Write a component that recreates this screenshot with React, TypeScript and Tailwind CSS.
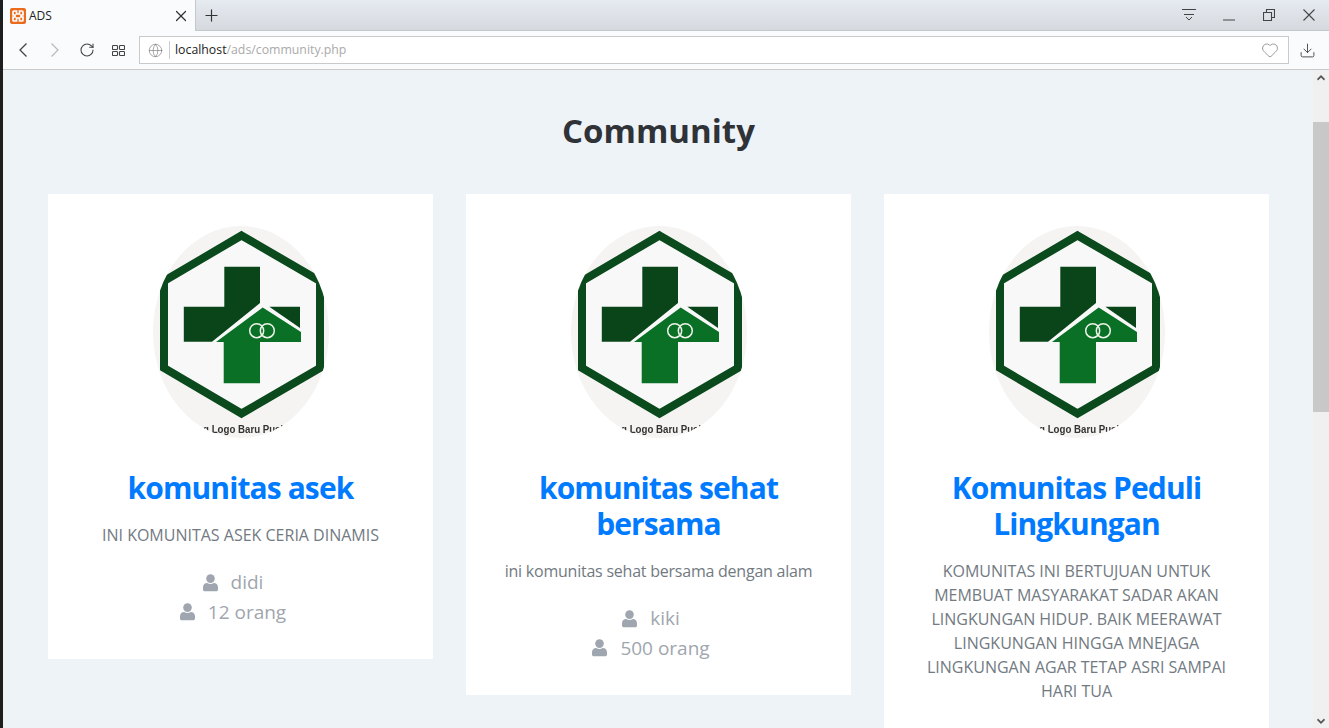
import { useId } from "react";
import { Plus, X, RotateCw, Heart, Download, Globe } from "lucide-react";

interface Community {
  title: string;
  description: string;
  descClass?: string;
  owner?: string;
  members?: string;
}

const communities: Community[] = [
  {
    title: "komunitas asek",
    description: "INI KOMUNITAS ASEK CERIA DINAMIS",
    owner: "didi",
    members: "12 orang",
  },
  {
    title: "komunitas sehat bersama",
    description: "ini komunitas sehat bersama dengan alam",
    descClass: "tracking-[-0.23px]",
    owner: "kiki",
    members: "500 orang",
  },
  {
    title: "Komunitas Peduli Lingkungan",
    description:
      "KOMUNITAS INI BERTUJUAN UNTUK MEMBUAT MASYARAKAT SADAR AKAN LINGKUNGAN HIDUP. BAIK MEERAWAT LINGKUNGAN HINGGA MNEJAGA LINGKUNGAN AGAR TETAP ASRI SAMPAI HARI TUA",
  },
];

function XamppIcon() {
  return (
    <svg width="16" height="16" viewBox="0 0 16 16">
      <rect width="16" height="16" rx="2" fill="#ea6b1e" />
      <path
        d="M4 3h2.500v3h3V3H12a1 1 0 0 1 1 1v3h-2v2h2v3a1 1 0 0 1-1 1H9.500v-3h-3v3H4a1 1 0 0 1-1-1V9h2V7H3V4a1 1 0 0 1 1-1z"
        fill="none"
        stroke="#fff"
        strokeWidth="1.700"
      />
    </svg>
  );
}

function PersonIcon() {
  return (
    <svg width="15" height="18" viewBox="0 0 15 18" fill="#9fa6b0">
      <circle cx="7.500" cy="4.600" r="4.300" />
      <path d="M0 15.500v-2.300C0 10.600 2 9 4.200 9c1 .6 2.100 1 3.300 1s2.300-.4 3.300-1C13 9 15 10.600 15 13.200v2.300c0 1-.8 1.800-1.800 1.800H1.800C.8 17.300 0 16.500 0 15.500z" />
    </svg>
  );
}

function PuskesmasLogo() {
  const id = useId();
  const clip = `${id}-clip`;
  return (
    <svg width="176" height="212" viewBox="0 0 176 212" className="block mx-auto blur-[0.3px]">
      <defs>
        <clipPath id={clip}>
          <ellipse cx="88" cy="106" rx="88" ry="106" />
        </clipPath>
      </defs>
      <g clipPath={`url(#${clip})`}>
        <rect width="176" height="212" fill="#f5f4f3" />
        <polygon
          points="88.500,9.500 167,55 167,142 88.500,187.500 11,142 11,55"
          fill="#f8f8f8"
          stroke="#0a4a1c"
          strokeWidth="8"
        />
        <polygon
          points="71.300,40.700 107,40.700 107,77 59,115.700 30.800,115.700 30.800,80.700 71.300,80.700"
          fill="#0a4519"
        />
        <polygon points="116.300,80.700 147,80.700 147,102" fill="#0a4519" />
        <polygon
          points="109.700,81.500 148,106 148,116 107,116 107,157.300 70.700,157.300 70.700,116 63,116"
          fill="#0a7026"
        />
        <circle cx="103.700" cy="104.700" r="7" fill="none" stroke="#eef3ea" strokeWidth="1.500" />
        <circle cx="114.300" cy="104.700" r="7" fill="none" stroke="#eef3ea" strokeWidth="1.500" />
        <text
          x="88"
          y="207"
          textAnchor="middle"
          fontSize="11"
          fontWeight="700"
          fill="#333"
          fontFamily="'Liberation Sans', sans-serif"
          textLength="150"
          lengthAdjust="spacingAndGlyphs"
        >
          Lambang Logo Baru Puskesmas
        </text>
      </g>
    </svg>
  );
}

function CommunityCard({ item }: { item: Community }) {
  return (
    <div className="bg-white px-8 pt-8 pb-[32px] text-center">
      <PuskesmasLogo />
      <h3 className="mt-8 text-[30px] leading-9 font-bold tracking-[-0.9px] text-[#007bff]">{item.title}</h3>
      <p className={`mt-[17px] text-base leading-6 text-[#727a82] ${item.descClass ?? ""}`}>{item.description}</p>
      {item.owner && (
        <div className="mt-[21px] text-[19px] leading-[29.5px] text-[#a0a6ae]">
          <div className="flex items-center justify-center gap-[13px] pr-[15px]">
            <PersonIcon />
            <span>{item.owner}</span>
          </div>
          <div className="flex items-center justify-center gap-[13px] pr-[15px]">
            <PersonIcon />
            <span>{item.members}</span>
          </div>
        </div>
      )}
    </div>
  );
}

export default function App() {
  return (
    <div className="h-screen flex overflow-hidden bg-[#eef3f7] font-['Open_Sans',sans-serif]">
      {/* Dark window edge */}
      <div className="w-[3px] shrink-0 bg-[#1e1e1e]" />

      <div className="flex-1 min-w-0 flex flex-col">
        {/* Tab bar */}
        <div className="h-[31px] flex items-stretch bg-gradient-to-b from-[#e6eaf1] to-[#d6dadf] border-b border-[#c4c8cc]">
          <div className="w-[193px] -mb-px flex items-center pl-[7px] pr-[5px] bg-[#fafbfc] border-r border-[#c4c8cc] text-xs text-[#222]">
            <XamppIcon />
            <span className="ml-[3px]">ADS</span>
            <X className="ml-auto text-[#333]" size={18} strokeWidth={1.600} />
          </div>
          <Plus className="ml-1.5 self-center text-[#333]" size={19} strokeWidth={1.500} />
          <div className="ml-auto mr-3.5 flex items-center">
            <svg width="14" height="12" viewBox="0 0 14 12" fill="none" stroke="#444" strokeWidth="1">
              <path d="M0 .5h14M2 5.500h10M4 8l3 3 3-3" />
            </svg>
            <svg className="ml-[27px] mt-[10px]" width="12" height="2" viewBox="0 0 12 2" stroke="#444">
              <path d="M0 1h12" />
            </svg>
            <svg className="ml-[28px]" width="12" height="12" viewBox="0 0 12 12" fill="none" stroke="#444" strokeWidth="1.100">
              <path d="M.5 3.500h8v8h-8zM3.500 3.500v-3h8v8h-3" />
            </svg>
            <svg className="ml-[28px]" width="12" height="12" viewBox="0 0 12 12" fill="none" stroke="#444" strokeWidth="1.100">
              <path d="M.5.500l11 11M11.500.500l-11 11" />
            </svg>
          </div>
        </div>

        {/* Address bar */}
        <div className="h-[39px] flex items-center bg-[#fafbfc] border-b border-[#c8cacc]">
          <svg className="ml-4" width="8" height="14" viewBox="0 0 8 14" fill="none" stroke="#444" strokeWidth="1.300">
            <path d="M7.500.500L1 7l6.500 6.500" />
          </svg>
          <svg className="ml-6" width="8" height="14" viewBox="0 0 8 14" fill="none" stroke="#bbb" strokeWidth="1.300">
            <path d="M.5.500L7 7l-6.500 6.500" />
          </svg>
          <RotateCw className="ml-5 text-[#444]" size={16} strokeWidth={1.600} />
          <svg className="ml-[17px]" width="13" height="13" viewBox="0 0 13 13" fill="none" stroke="#444" strokeWidth="1.100">
            <rect x=".5" y="1.500" width="5" height="4" rx=".8" />
            <rect x="7.500" y="1.500" width="5" height="4" rx=".8" />
            <rect x=".5" y="7.500" width="5" height="4" rx=".8" />
            <rect x="7.500" y="7.500" width="5" height="4" rx=".8" />
          </svg>
          <div className="ml-3.5 w-[1150px] h-7 flex items-center bg-white border border-[#c8cacc] text-[12.3px]">
            <Globe className="ml-2 text-[#777]" size={15} strokeWidth={1} />
            <span className="ml-[6px] mr-[5px] h-[18px] w-px bg-[#ccc]" />
            <span className="text-[#222]">localhost</span>
            <span className="text-[#aaa]">/ads/community.php</span>
            <Heart className="ml-auto mr-[9px] text-[#888]" size={18} strokeWidth={1.100} />
          </div>
          <Download className="ml-2.5 text-[#444]" size={17} strokeWidth={1.300} />
        </div>

        {/* Page */}
        <div className="flex-1 min-h-0 flex">
          <main className="flex-1 min-w-0 pl-[45px] pr-[44px] overflow-hidden">
            <h1 className="mt-[39px] text-center text-[33px] leading-[43px] font-bold text-[#2f3237]">Community</h1>
            <div className="mt-[42px] grid grid-cols-3 gap-[33px] items-start">
              {communities.map((item) => (
                <CommunityCard key={item.title} item={item} />
              ))}
            </div>
          </main>
          <div className="w-4 flex flex-col bg-[#f0f0f0]">
            <svg className="mt-[5px] mx-auto shrink-0" width="8" height="6" viewBox="0 0 8 6" fill="#555">
              <path d="M4 0l4 4-1 1.500-3-3-3 3L0 4z" />
            </svg>
            <div className="mt-[41px] h-[290px] shrink-0 bg-[#c8c8c8]" />
            <svg className="mt-auto mb-[4px] mx-auto shrink-0" width="8" height="6" viewBox="0 0 8 6" fill="#555">
              <path d="M4 6L0 2 1 .5l3 3 3-3L8 2z" />
            </svg>
          </div>
        </div>
      </div>
    </div>
  );
}
